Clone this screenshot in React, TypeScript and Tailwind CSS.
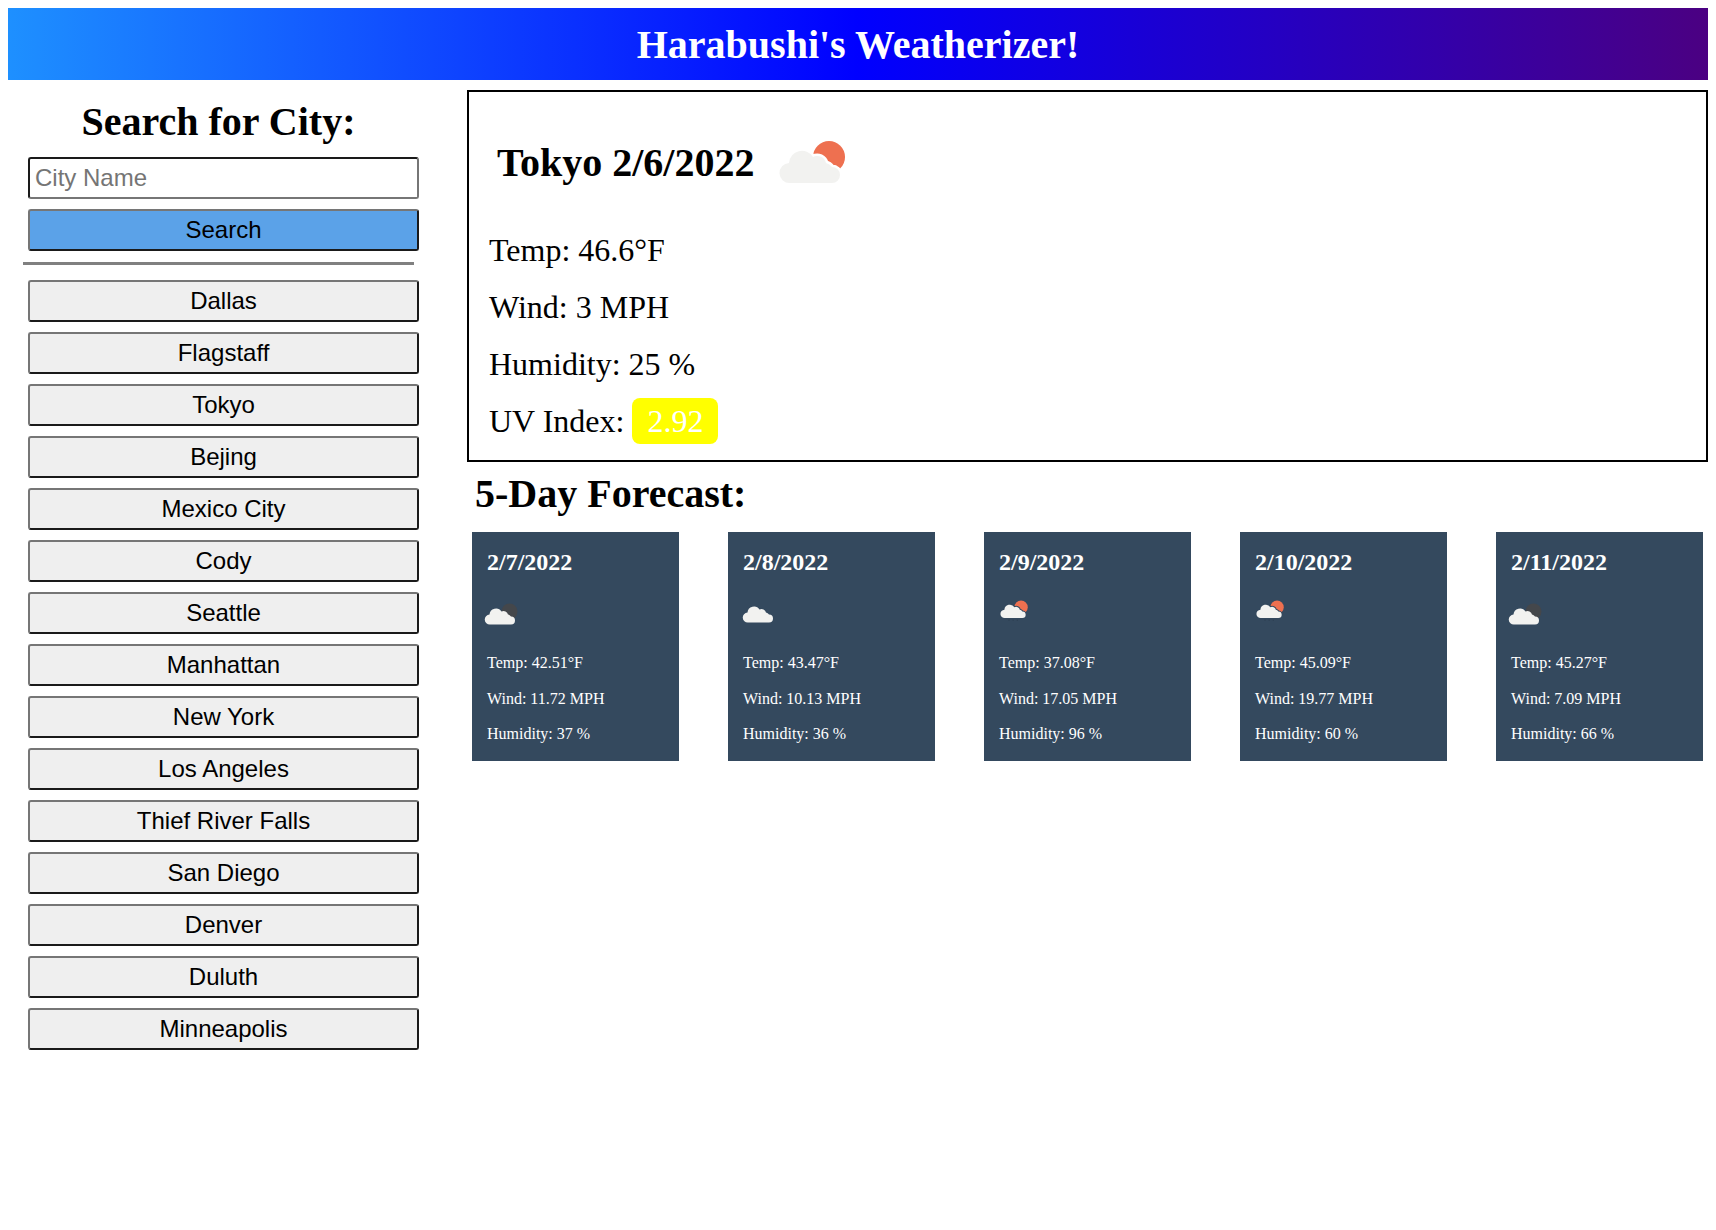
import React from 'react';

const cities = [
  'Dallas', 'Flagstaff', 'Tokyo', 'Bejing', 'Mexico City', 'Cody', 'Seattle', 'Manhattan',
  'New York', 'Los Angeles', 'Thief River Falls', 'San Diego', 'Denver', 'Duluth', 'Minneapolis',
];

const forecast = [
  { date: '2/7/2022', icon: 'moon', temp: '42.51', wind: '11.72', humidity: '37' },
  { date: '2/8/2022', icon: 'cloud', temp: '43.47', wind: '10.13', humidity: '36' },
  { date: '2/9/2022', icon: 'rain', temp: '37.08', wind: '17.05', humidity: '96' },
  { date: '2/10/2022', icon: 'rain', temp: '45.09', wind: '19.77', humidity: '60' },
  { date: '2/11/2022', icon: 'moon', temp: '45.27', wind: '7.09', humidity: '66' },
];

const CLOUD = 'M18 53a10 10 0 0 1-1-20 13 13 0 0 1 24-6 9 9 0 0 1 13 6 10 10 0 0 1 6 4 8 8 0 0 1 0 16z';

// sky = disc behind the cloud, halo = stroke between the disc and the cloud
function WeatherIcon({ sky, halo, className, drops }: { sky?: string; halo?: string; className: string; drops?: boolean }) {
  return (
    <svg viewBox="0 0 80 60" className={className}>
      {sky && <circle cx="57" cy="27" r="16" fill={sky} />}
      {drops && <path d="M28 56v6M38 56v6M48 56v6" stroke="#2c3e50" strokeWidth="2" />}
      <path d={CLOUD} fill="#f2f2f0" stroke={halo ?? 'none'} strokeWidth={halo ? 5 : 0} paintOrder="stroke" />
    </svg>
  );
}

function ForecastIcon({ type }: { type: string }) {
  if (type === 'moon') {
    return <WeatherIcon sky="#44474b" className="block w-[40px] h-[30px] mt-[22px] mb-[26px] -ml-[6px]" />;
  }
  if (type === 'rain') {
    return <WeatherIcon sky="#ee7050" halo="#34495e" drops className="block w-[34px] h-[25px] mt-[20px] mb-[33px] -ml-[2px]" />;
  }
  return <WeatherIcon className="block w-[40px] h-[30px] mt-[20px] mb-[28px] -ml-[4px]" />;
}

function CityButton({ label }: { label: string }) {
  return (
    <button className="block w-[391px] h-[42px] ml-[5px] mb-[10px] bg-[#efefef] text-black text-[24px] rounded-[3px] border-2 border-t-[#767676] border-l-[#767676] border-r-[#1a1a1a] border-b-[#1a1a1a]">
      {label}
    </button>
  );
}

export default function App() {
  return (
    <div className="min-h-[1230px] bg-white text-black px-2 pt-2 font-['Liberation_Serif',serif]">
      <header className="h-[72px] pt-[2px] flex items-center justify-center bg-[linear-gradient(to_right,#1e90ff,#0000ff,#4b0082)]">
        <h1 className="text-[40px] leading-[46px] font-bold text-white">Harabushi's Weatherizer!</h1>
      </header>

      <div className="flex">
        {/* Search column */}
        <aside className="w-[459px] shrink-0 pl-[15px] font-['Liberation_Sans',sans-serif]">
          <div className="w-[391px]">
            <h2 className="mt-[19px] mb-[12px] text-center text-[40px] leading-[46px] font-bold font-['Liberation_Serif',serif]">
              Search for City:
            </h2>
            <input
              placeholder="City Name"
              className="block w-[391px] h-[42px] ml-[5px] px-[5px] bg-white text-[24px] rounded-[3px] border-2 border-t-[#1a1a1a] border-l-[#1a1a1a] border-r-[#767676] border-b-[#767676] placeholder:text-[#757575] outline-none"
            />
            <button className="block w-[391px] h-[42px] ml-[5px] mt-[10px] bg-[#5ba2e8] text-black text-[24px] rounded-[3px] border-2 border-t-[#767676] border-l-[#767676] border-r-[#1a1a1a] border-b-[#1a1a1a]">
              Search
            </button>
            <hr className="mt-[11px] mb-[15px] h-[3px] border-0 bg-[#808080]" />
            {cities.map((city) => (
              <CityButton key={city} label={city} />
            ))}
          </div>
        </aside>

        <main className="flex-1 min-w-0 pt-[10px]">
          {/* Current weather */}
          <section className="border-2 border-black px-[20px] h-[372px]">
            <div className="h-[140px] pt-[48px] flex items-start pl-[8px]">
              <h2 className="text-[40px] leading-[46px] font-bold">Tokyo 2/6/2022</h2>
              <WeatherIcon sky="#ee7050" halo="#ffffff" className="block w-[80px] h-[60px] ml-[18px] -mt-[10px]" />
            </div>
            <p className="text-[32px] leading-[37px] mb-[20px]">Temp: 46.6°F</p>
            <p className="text-[32px] leading-[37px] mb-[20px]">Wind: 3 MPH</p>
            <p className="text-[32px] leading-[37px] mb-[20px]">Humidity: 25 %</p>
            <p className="text-[32px] leading-[37px]">
              UV Index: <span className="bg-[#ffff00] text-white rounded-[8px] px-[15px] py-[5px]">2.92</span>
            </p>
          </section>

          <h2 className="mt-[9px] mb-[15px] pl-[8px] text-[40px] leading-[46px] font-bold">5-Day Forecast:</h2>

          {/* Forecast cards */}
          <div className="flex justify-between px-[5px]">
            {forecast.map((day) => (
              <div key={day.date} className="w-[207px] h-[229px] bg-[#34495e] text-white px-[15px] pt-[16px]">
                <h3 className="text-[24px] leading-[28px] font-bold">{day.date}</h3>
                <ForecastIcon type={day.icon} />
                <p className="text-[16px] leading-[18px] mb-[18px]">Temp: {day.temp}°F</p>
                <p className="text-[16px] leading-[18px] mb-[17px]">Wind: {day.wind} MPH</p>
                <p className="text-[16px] leading-[18px]">Humidity: {day.humidity} %</p>
              </div>
            ))}
          </div>
        </main>
      </div>
    </div>
  );
}
